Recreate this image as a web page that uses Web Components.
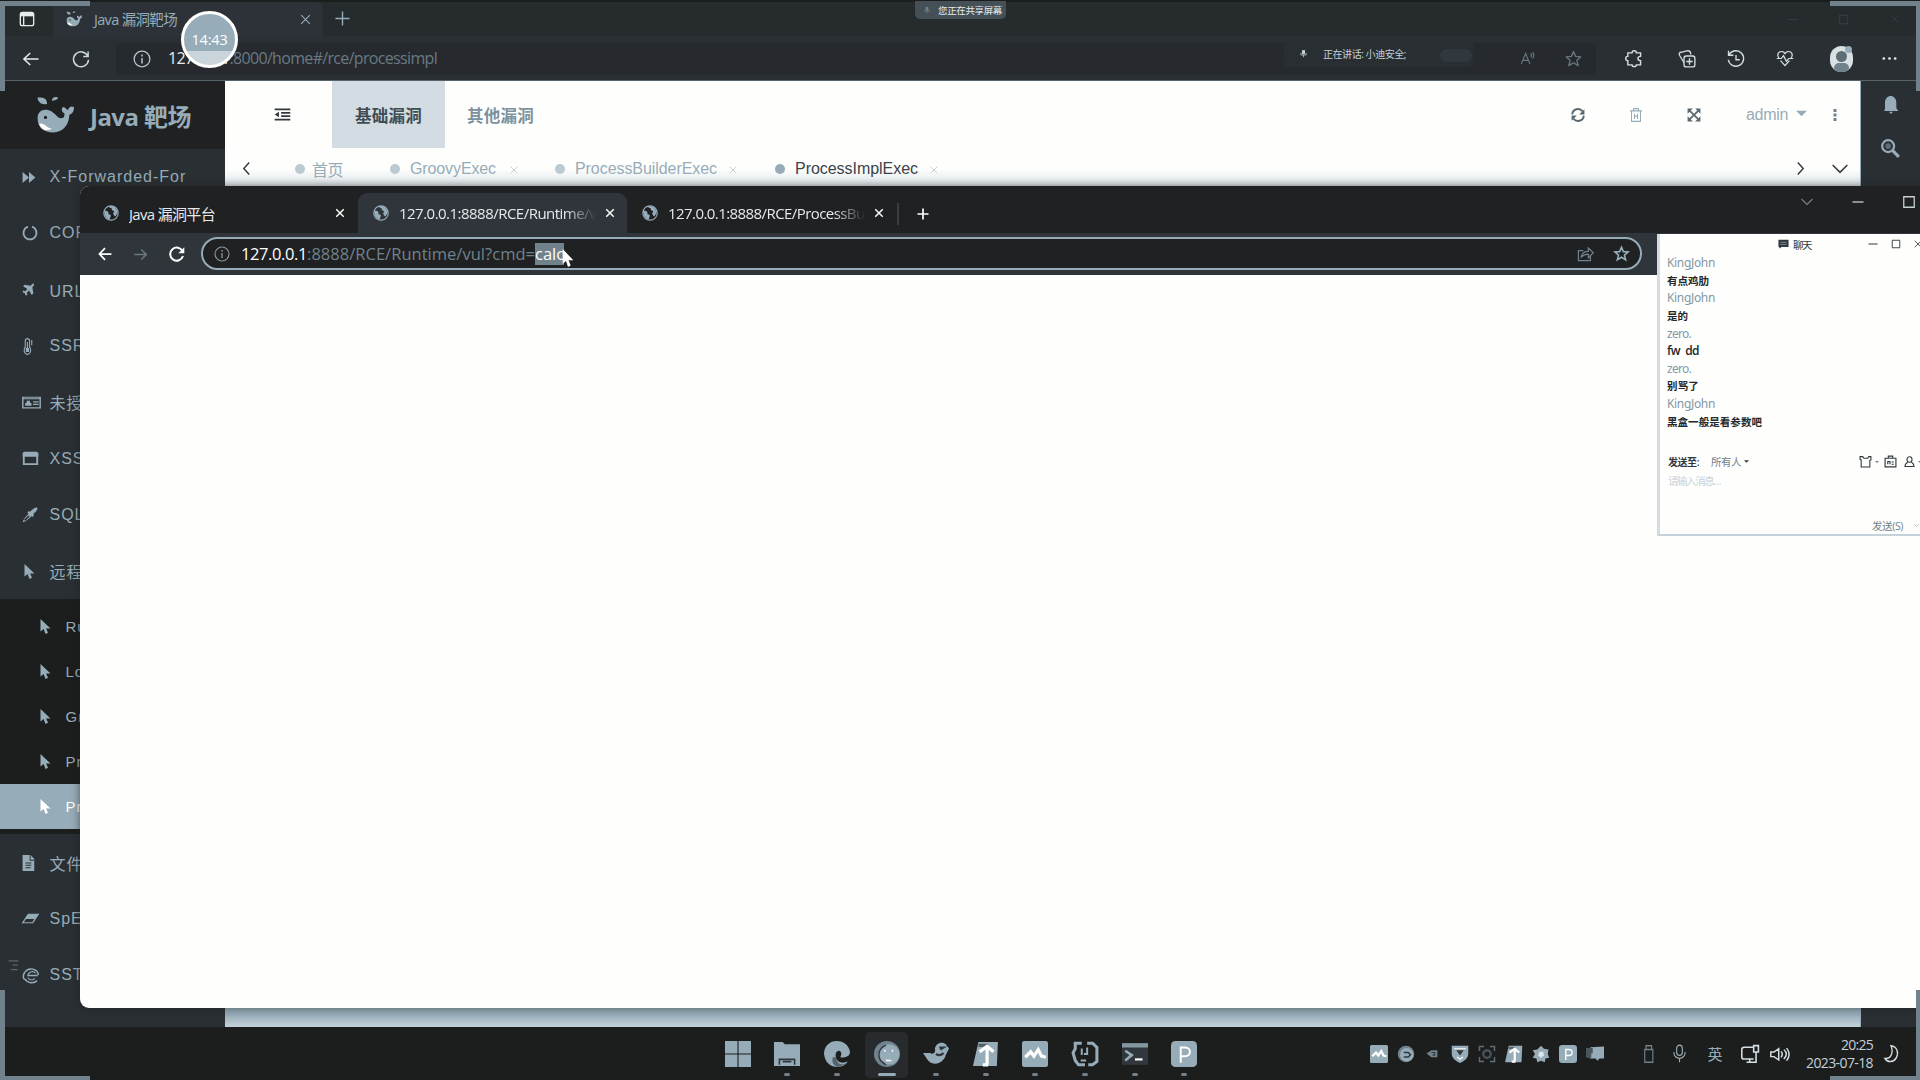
<!DOCTYPE html>
<html lang="zh-CN">
<head>
<meta charset="utf-8">
<title>Java 漏洞靶场</title>
<style>
html,body{margin:0;height:100%;overflow:hidden;background:#1c1e1e}
body{font-family:"Open Sans","Noto Sans CJK SC",sans-serif;font-size:15px;color:#96acb8}
</style>
</head>
<body>
<desk-top></desk-top>
<script>
const fitQueue = [];
const define = (name, html, init) => customElements.define(name, class extends HTMLElement {
  connectedCallback() {
    if (this.shadowRoot) return;
    const root = this.attachShadow({mode: 'open'});
    root.innerHTML = typeof html === 'function' ? html(this) : html;
    if (init) init(this, root);
  }
});

/* ---------- icons, all on a 24 unit grid ---------- */
const S = 'fill="none" stroke="currentColor" stroke-width="2"';
const s = w => `fill="none" stroke="currentColor" stroke-width="${w}"`;
const F = 'fill="currentColor"';
const ICONS = {
  panel: `<path ${S} d="M5 2h14a3 3 0 0 1 3 3v14a3 3 0 0 1-3 3H5a3 3 0 0 1-3-3V5a3 3 0 0 1 3-3zM7 8v14"/><path ${F} d="M2 3h20v5H2z"/>`,
  whale: `<path ${F} d="M1 14c0-4 3-6 7-5 4 1 5 5 8 5 2 0 2-2 2-3-2-1-2-3-1-4 1 0 2 1 3 2 1-2 2-3 4-2 0 3-1 4-3 5 0 6-4 11-10 11C5 23 1 20 1 14zM7 5C4 6 1 4 1 1c3 0 6 0 6 4zm3-2c0-2 2-3 4-2 0 1-2 2-4 2z"/><circle cx="6" cy="13.500" r="1" fill="#1f2122"/><path d="M2 17.500c3-1 5 3 8 3-3 2-7 1-8-3z" fill="#fefefd"/>`,
  x: `<path ${s(2)} d="M4 4l16 16M20 4L4 20"/>`,
  xb: `<path ${s(3.400)} d="M3 3l18 18M21 3L3 21"/>`,
  plus: `<path ${s(2)} d="M12 2v20M2 12h20"/>`,
  plusb: `<path ${s(3.400)} d="M12 1v22M1 12h22"/>`,
  back: `<path ${s(2)} d="M22 12H3M11 4l-8.500 8 8.500 8"/>`,
  backb: `<path ${s(3)} d="M23 12H3M12 2L2.500 12l9.500 10"/>`,
  fwd: `<path ${s(2.400)} d="M2 12h19M13 4l8.500 8-8.500 8"/>`,
  reload: `<path ${s(2)} d="M21 8A10 10 0 1 0 22 13M21.500 2v6.500H15"/>`,
  reload2: `<path ${s(3)} d="M20.500 8A9.800 9.800 0 1 0 21 15"/><path ${F} d="M23 2v9h-9z"/>`,
  info: `<circle cx="12" cy="12" r="10.500" ${s(1.7)}/><path ${s(2)} d="M12 10.500V18M12 6v2.500"/>`,
  ff: `<path ${F} d="M1 2l11 10L1 22zM12 2l11 10-11 10z"/>`,
  ring: `<path ${s(2.8)} d="M9 2.500a9.800 9.800 0 1 0 6 0"/>`,
  plane: `<path ${F} d="M22 1c-2-1-4 1-6 4L5 3 2 6l8 5-4 4-4-1-1 3 4 2 2 4 3-1-1-4 4-4 5 8 3-3-2-11c2-2 4-5 3-7z"/>`,
  thermo: `<path ${s(2)} d="M6 14V5a4 4 0 0 1 8 0v9a6 6 0 1 1-8 0z"/><path ${F} d="M9 6h2v9h2v6H7v-6h2zM17 3h2v8h-2z"/>`,
  idcard: `<path ${s(1.8)} d="M1 3.500h22v17H1zM1 6h22M14 11h7M14 15h7"/><path ${F} d="M4 17v-4l2-1V9h4v3l2 1v4z"/>`,
  win: `<path ${s(2.6)} d="M2.500 4h19v17h-19z"/><path ${F} d="M1 3l2-2h18l2 2v6H1z"/>`,
  pen: `<path ${F} d="M23 1c-3-1-7 2-11 6l-2-1-2 3 2 1c-4 4-8 8-9 13 5-1 9-5 13-9l2 1 2-3-1-2c4-3 7-6 6-9z"/><path d="M4 20l6.500-6.500" stroke="#2a2f33" stroke-width="2.500"/>`,
  ptr: `<path ${F} d="M4 0v20l5-4 3 8 4-2-3-7h7z"/>`,
  doc: `<path ${F} d="M1 0h14l6 6v18H1z"/><path d="M14 0v8h7M6 12h10M6 15.500h10M6 19h9" stroke="#2a2f33" stroke-width="1.600" fill="none"/>`,
  eraser: `<path ${s(1.9)} d="M9 4h14l-8 16H1z"/><path ${F} d="M9 4h14l-4.500 9H4z"/>`,
  ie: `<path ${s(2)} d="M7 12h14M22 11A10 10 0 0 0 4 7M20 19c-4 5-13 4-16-2M4 7c-3 4-3 9 0 11"/><path ${s(1.5)} d="M8 11c1-5 8-6 10-2M8 15c1 3 6 5 9 1"/>`,
  outdent: `<path ${s(3)} d="M1 2.500h22M10 9h13M10 15h13M1 21.500h22"/><path ${F} d="M7 7v10L1 12z"/>`,
  lines: `<path ${s(1.8)} d="M1 2h22M10 11h12M6 21h15"/>`,
  left: `<path ${s(2.6)} d="M17 1L7 12l10 11"/>`,
  right: `<path ${s(2.6)} d="M7 1l10 11L7 23"/>`,
  down: `<path ${s(2.300)} d="M1 6l11 11L23 6"/>`,
  mic: `<path ${F} d="M8 3h8v11H8z"/><path ${s(2)} d="M5 10v6h14v-6M12 16v6"/>`,
  mic2: `<rect x="8" y="1.500" width="8" height="13" rx="4" ${s(1.6)}/><path ${s(1.6)} d="M4 10c0 11 16 11 16 0M12 18v5"/>`,
  read: `<path ${s(1.8)} d="M2 21L9 4l7 17M5 15h8M17 4c2 2 2 4 0 6M20 2c3 3 3 6 0 10"/>`,
  star: `<path ${s(1.8)} stroke-linejoin="round" d="M12 2l3 7 7.500.6-5.700 5 1.800 7.400-6.600-4-6.600 4 1.800-7.400-5.700-5L9 9z"/>`,
  starb: `<path ${s(2.6)} d="M12 2l3 7 7.500.6-5.700 5 1.800 7.400-6.600-4-6.600 4 1.800-7.400-5.700-5L9 9z"/>`,
  puzzle: `<path ${s(2)} d="M6 4h4c0-4 6-4 6 0h6v5c-5 0-5 6 0 6v6h-6c0 3-6 3-6 0H4v-6c-4 0-4-6 0-6V4z"/>`,
  coll: `<path ${s(1.7)} d="M8 17L2 7c-1-2 0-4 2-4l9-2c2 0 4 2 4 5"/><rect x="8" y="8" width="14.500" height="14.500" rx="3" ${s(1.8)}/><path ${s(1.8)} d="M15.300 11v8.500M11 15.300h8.500"/>`,
  history: `<path ${s(1.8)} d="M3 6A10.300 10.300 0 1 1 1.700 13M2 1v6h6.500M12 6.500V13h5"/>`,
  heart: `<path ${s(1.7)} d="M4 12C-1 3 8-1 12 5c4-6 13-2 8 7M1 12h6l3-4 4 8 3-4h6M6 15l6 7 6-7"/>`,
  more: `<g ${F}><circle cx="4" cy="12" r="1.900"/><circle cx="12" cy="12" r="1.900"/><circle cx="20" cy="12" r="1.900"/></g>`,
  vmore: `<g ${F}><path d="M9 0h6v6H9zM9 9h6v6H9zM9 18h6v6H9z"/></g>`,
  sync: `<path ${s(3.200)} d="M2 11C3 1 15-1 20 6M22 13c-1 10-13 12-18 5"/><path ${F} d="M23 2v9h-9zM1 22v-9h9z"/>`,
  trash: `<path ${s(2)} d="M0 5h24M7 5V1h10v4M3 5v18h18V5M9 10v9M15 10v9M9 14h6"/>`,
  expand: `<path ${s(3)} d="M4 4l16 16M20 4L4 20"/><path ${F} d="M1 1h9L1 10zM23 1v9l-9-9zM1 23v-9l9 9zM23 23h-9l9-9z"/>`,
  caret: `<path ${F} d="M0 6h24L12 18z"/>`,
  bell: `<path ${F} d="M3 18V9C3-3 20-3 20 9v7l3 4H2v-2zM9 21h6l-3 3z"/>`,
  search: `<circle cx="9" cy="9" r="7.500" ${s(2.8)}/><path ${s(4)} d="M14.500 14.500l8 8"/><circle cx="9" cy="9" r="3.500" fill="#5f6d75"/>`,
  globe: `<circle cx="12" cy="12" r="10.800" ${s(1.8)}/><path ${F} d="M2 9c5-1 7 2 6 5 3 0 5 2 3 4l-1 4C4 20 2 16 2 9zM9 2c6-2 12 3 13 9l-3 6c-3 0-2-3-4-4l2-4c-3 0-4-1-4-4-2 0-4-1-4-3z"/>`,
  share: `<path ${s(1.7)} d="M9 8H2v14h17v-6M6 17c1-6 5-8 10-8V4l7 7-7 7v-5c-5 0-7 1-10 4z"/>`,
  min: `<path ${s(2.400)} d="M1 12h22"/>`,
  box: `<path ${s(2.200)} d="M3 3h18v18H3z"/>`,
  bubble: `<path ${F} d="M1 2h22v17H8l-5 4v-4H1z"/><path d="M5 8h14M5 13h14" stroke="#96acb8" stroke-width="1.500"/>`,
  shirt: `<path ${s(2)} d="M2 3h5l2 3h7l2-3h4v6l-2 1v12H4V9L2 8z"/>`,
  robot: `<path ${s(2.1)} d="M2 6h20v16H2zM8 6V2h8v4M7 17v-5h4v5M14 13h4M14 17h4"/>`,
  person: `<circle cx="12" cy="7" r="5.500" ${s(2.300)}/><path ${s(2.300)} d="M8 12c-6 4-6 6-6 9h20c0-3 0-5-6-9"/>`,
  usb: `<path ${s(1.8)} d="M8 6V1h9v5M6 6h13v17H6z"/>`,
  net: `<path ${s(2)} d="M16 4H4a3 3 0 0 0-3 3v9a3 3 0 0 0 3 3h12M7 23h12V10M16 2h6v8h-6zM11 19v4"/>`,
  vol: `<path ${s(1.9)} d="M1 9h4l6-5v17l-6-5H1zM14 8c2 3 2 6 0 9M17.500 5.500c4 4 4 9 0 14M21 3c4 6 4 13 0 19"/>`,
  moon: `<path ${s(2)} d="M12 1c9 1 12 9 8 16-4 6-13 7-17 1 9 1 13-8 9-17z"/>`,
  start: `<path ${F} d="M0 0h11.500v11.500H0zM12.500 0H24v11.500H12.500zM0 12.500h11.500V24H0zM12.500 12.500H24V24H12.500z"/>`,
  folder: `<path ${F} d="M0 1h8l2 2h14v20H0z"/><path d="M5 22v-5h14v5M8 19h8" fill="none" stroke="#31383d" stroke-width="1.500"/>`,
  swirl: `<path ${F} d="M12 0C4 0 0 6 0 12c1 8 6 12 13 12 4 0 7-2 9-5-5 2-10 1-11-4-1-4 1-6 3-6 3 1 2 4 1 6 5 1 9-1 9-5C23 4 18 0 12 0z"/><path d="M11 15c1 7 6 8 10 5l-2 2-6 2c-4-1-6-4-5-9z" fill="#56636b"/>`,
  browser: `<circle cx="12" cy="12" r="12" fill="#71828c"/><circle cx="14" cy="12.500" r="9.500" ${F}/><path d="M10 8v2M17 8v2M11 18h5" stroke="#fefefd" stroke-width="1.300" fill="none"/><path d="M11 4C5 6 3 12 6 18l5 4" stroke="#31383d" stroke-width="1.300" fill="none"/>`,
  bird: `<path ${F} d="M0 11h7c2 2 5 0 4-4 1-5 6-7 10-4l3 4-3 6c-2 8-12 11-17 4z"/><path d="M12 12c3 2 5 1 7-1M15 6h4l-3 2" stroke="#31383d" stroke-width="2" fill="none"/>`,
  tool: `<path ${F} d="M5 1h18l-1 22H0z"/><path d="M5 4h9" stroke="#56636b" stroke-width="3"/><path d="M13 22V7M6 10l7-5 6 5M9 22h5" stroke="#fefefd" stroke-width="3" fill="none"/>`,
  wave: `<path ${F} d="M0 2q0-2 2-2h20q2 0 2 2v20q0 2-2 2H2q-2 0-2-2z"/><path d="M3 15l5-5 3 4 4-6 3 6 4 1" stroke="#fefefd" stroke-width="3" fill="none"/>`,
  idea: `<path ${s(2.800)} d="M9 2H3v5l-2 4 2 7 3 4h6M14 2h5l4 4v13l-4 3h-4"/><path ${s(1.8)} d="M8 18h5M9 7v6M14 6v6h-3"/>`,
  term: `<path fill="#31383d" d="M0 2h24v20H0z"/><path fill="#84979f" d="M0 2h24v4H0z"/><path ${s(2.400)} d="M3 9l6 4-6 5"/><path stroke="#fefefd" stroke-width="2" d="M12 17h7"/>`,
  ptile: `<rect width="24" height="24" rx="4" ${F}/><path d="M9 20V6h4c6 0 6 8 0 8H9" stroke="#fefefd" stroke-width="1.800" fill="none"/>`,
  spiral: `<circle cx="12" cy="12" r="11" fill="#71828c"/><circle cx="13" cy="13" r="9" ${F}/><path d="M9 10h6l3 3-3 3H9" fill="none" stroke="#31383d" stroke-width="2"/>`,
  fish: `<path fill="#71828c" d="M1 12l9-6h11v13H10z"/><path d="M10 10h6v5h-4" stroke="#31383d" stroke-width="2" fill="none"/>`,
  shield: `<path ${F} d="M1 1h22v10c0 7-5 10-11 13C6 21 1 18 1 11z"/><path d="M7 7h10l-5 7z" fill="#31383d"/><path d="M4 5h16M8 16l4 3 4-3" stroke="#fefefd" stroke-width="1.500" fill="none"/>`,
  frame: `<path fill="none" stroke="#5f6d75" stroke-width="2" d="M2 8V2h6M16 2h6v6M22 16v6h-6M8 22H2v-6"/><circle cx="12" cy="12" r="5" fill="none" stroke="#4a555c" stroke-width="3"/>`,
  blob: `<path ${F} d="M12 1l4 4 6 1-1 6 2 5-5 1-1 5-5-2-5 2-1-5-5-1 3-5-3-5 6-1z"/><path fill="#dfe6e9" d="M10 9h5l1 5-4 3-4-3z"/>`,
  screens: `<path ${F} d="M6 3l18-1v16h-6l-3 3-2-3H5z"/><path fill="#4a555c" d="M0 4h9v7H7v6H0z"/>`
};
define('ui-icon', el => {
  const z = el.getAttribute('size') || 16, h = el.getAttribute('h') || z;
  return `<style>:host{display:inline-flex;flex:none}svg{display:block;overflow:visible}</style>
  <svg width="${z}" height="${h}" viewBox="0 0 24 24" preserveAspectRatio="none">${ICONS[el.getAttribute('name')]}</svg>`;
});

/* text whose tracking is adjusted so that the run takes exactly w pixels */
define('fit-text', `<style>:host{display:inline-block;flex:none;white-space:pre}</style><slot></slot>`, el => fitQueue.push(el));

/* fixed-width box in a row, content centred */
define('ui-cell', el => `<style>:host{display:flex;flex:none;width:${el.getAttribute('w')}px;align-items:center;justify-content:${el.hasAttribute('start') ? 'flex-start' : 'center'};color:${el.getAttribute('c') || 'inherit'}}</style><slot></slot>`);
define('ui-row', el => `<style>:host{display:flex;flex:none;align-items:center;height:${el.getAttribute('h')}px}</style><slot></slot>`);

/* ---------- rear browser ---------- */
define('edge-tabs', `<style>
:host{display:block;height:36px;background:#262b2e}
.active{display:flex;align-items:center;height:34px;margin-top:2px;width:270px;background:#2c3237;border-radius:6px 6px 0 0}
.all{display:flex}
.r{margin-left:auto;display:flex;align-items:center;color:#353c41}
</style><div class="all">
<ui-row h="38"><ui-cell w="53" c="#e6ebed"><ui-icon name="panel" size="16"></ui-icon></ui-cell></ui-row>
<div class="active"><ui-cell w="41"><ui-icon name="whale" size="16"></ui-icon></ui-cell><ui-cell start w="192"><fit-text w="83" style="font-size:14.500px;margin-top:-2px">Java 漏洞靶场</fit-text></ui-cell><ui-cell w="38"><ui-icon name="x" size="13"></ui-icon></ui-cell></div>
<ui-row h="37"><ui-cell w="38"><ui-icon name="plus" size="17"></ui-icon></ui-cell></ui-row>
<div class="r"><ui-cell w="51"><ui-icon name="min" size="11"></ui-icon></ui-cell><ui-cell w="51"><ui-icon name="box" size="11"></ui-icon></ui-cell><ui-cell w="51"><ui-icon name="x" size="10"></ui-icon></ui-cell></div></div>`);
define('edge-toolbar', `<style>
:host{display:flex;align-items:center;height:45px;padding-top:1px;background:#2a2f33;border-bottom:1px solid #56636b;box-sizing:border-box}
.addr{display:flex;align-items:center;height:32px;width:1480px;border-radius:5px;background:#262a2e;box-sizing:border-box;flex:none}
.speak{display:flex;align-items:center;height:26px;margin-left:auto;width:190px;font-size:10px;color:#c4d0d6;background:#292e32;border-radius:4px;margin-bottom:10px}
.pill{width:32px;height:13px;border-radius:7px;background:#31383d;margin-top:4px}
.sep{width:1px;height:15px;background:#71828c}
.av{display:flex;margin-left:6px;align-items:flex-start}
.face{display:block;width:23px;height:26px;border-radius:12px;background:#d9e1e5;overflow:hidden;flex:none}
.badge{width:7px;height:7px;border-radius:4px;background:#96acb8;margin-left:-8px}
b{display:block;width:11px;height:11px;border-radius:6px;background:#5f6d75;margin:5px auto 1px}i{display:block;width:15px;height:10px;border-radius:7px;background:#71828c;margin:auto}
</style>
<ui-cell w="62" c="#e6ebed"><ui-icon name="back" size="18"></ui-icon></ui-cell><ui-cell w="38" c="#cbd6db"><ui-icon name="reload" size="18"></ui-icon></ui-cell><ui-cell w="16"></ui-cell>
<div class="addr"><ui-cell w="52" c="#b5c4cc"><ui-icon name="info" size="18"></ui-icon></ui-cell><fit-text w="269" style="font-size:16px;color:#697983;margin-bottom:1px"><span style="color:#e6ebed">127.0.0.1</span>:8000/home#/rce/processimpl</fit-text>
<div class="speak"><ui-cell w="39"><ui-icon name="mic" size="9"></ui-icon></ui-cell><fit-text w="83">正在讲话: 小迪安全;</fit-text><ui-cell w="99"><span class="pill"></span></ui-cell></div>
<ui-cell w="30"></ui-cell><ui-cell w="46" c="#697983"><ui-icon name="read" size="15"></ui-icon></ui-cell><ui-cell w="46" c="#697983"><ui-icon name="star" size="17"></ui-icon></ui-cell></div>
<ui-cell w="74" c="#d5dee2"><ui-icon name="puzzle" size="17"></ui-icon></ui-cell><span style="margin-right:-6px;margin-left:-11px" class="sep"></span>
<ui-cell w="68" c="#d5dee2"><ui-icon name="coll" size="18"></ui-icon></ui-cell><ui-cell w="30" c="#d5dee2"><ui-icon name="history" size="18"></ui-icon></ui-cell><ui-cell w="68" c="#d5dee2"><ui-icon name="heart" size="18" h="17"></ui-icon></ui-cell><ui-cell w="38"><span class="av"><span class="face"><b></b><i></i></span><span class="badge"></span></span></ui-cell><ui-cell w="64" c="#e6ebed"><ui-icon name="more" size="17"></ui-icon></ui-cell>`);

define('menu-item', el => `<style>
:host{display:flex;align-items:center;height:56.300px;padding-left:22px;color:#96acb8;font:16px "Liberation Sans","Noto Sans CJK SC",sans-serif;letter-spacing:1px;white-space:nowrap}
:host([sub]){height:45px;padding-left:38px;font-size:15px}
:host([on]){background:#96acb8;color:#fefefd}
span{width:27.500px;flex:none;display:flex;align-items:center}
</style><span><ui-icon name="${el.getAttribute('icon')}" size="${el.getAttribute('size') || 16}" h="${el.getAttribute('h') || el.getAttribute('size') || 16}"></ui-icon></span><slot></slot>`);
define('side-menu', `<style>
:host{display:flex;flex-direction:column;width:225px;flex:none;background:#2a2f33;overflow:hidden}
.brand{display:flex;align-items:center;height:68px;background:#1f2122;font:bold 24px "Open Sans","Noto Sans CJK SC",sans-serif;flex:none}
.sub{background:#1c1e1e;padding:5px 0}
menu-item{flex:none}
</style>
<div class="brand"><ui-cell w="90"><ui-icon name="whale" size="38" style="margin-left:20px"></ui-icon></ui-cell><fit-text w="101">Java 靶场</fit-text></div>
<menu-item icon="ff" size="14" h="13">X-Forwarded-For</menu-item>
<menu-item icon="ring">CORS</menu-item>
<menu-item icon="plane" size="13">URL重定向</menu-item>
<menu-item icon="thermo" size="13" h="16">SSRF</menu-item>
<menu-item icon="idcard" size="19" h="15">未授权</menu-item>
<menu-item icon="win" size="17" h="15">XSS</menu-item>
<menu-item icon="pen">SQLI</menu-item>
<menu-item icon="ptr" size="15">远程命令</menu-item>
<div class="sub">
<menu-item sub icon="ptr" size="15">Runtime</menu-item><menu-item sub icon="ptr" size="15">LoadJs</menu-item><menu-item sub icon="ptr" size="15">Groovy</menu-item><menu-item sub icon="ptr" size="15">ProcessBuilder</menu-item><menu-item sub on icon="ptr" size="15">ProcessImpl</menu-item></div>
<menu-item icon="doc" size="14" h="16">文件</menu-item>
<menu-item icon="eraser" size="17" h="13">SpEL</menu-item>
<menu-item icon="ie" size="18" h="17">SSTI</menu-item>`);
define('page-tab', el => `<style>
:host{display:flex;align-items:center;flex:none;width:${el.getAttribute('w')}px;color:#96acb8;font:16px "Liberation Sans","Noto Sans CJK SC",sans-serif}
.d{width:10px;height:10px;border-radius:5px;background:#bccad2;margin-right:10px;flex:none}
:host([noclose]) .d{margin-right:7px}
:host([on]){color:#3a434a}:host([on]) .d{background:#96acb8}
.x{margin-left:auto;color:#b9c8d0;display:flex;align-items:center;padding-top:2px;margin-right:-1px}
</style><span class="d"></span><slot></slot>${el.hasAttribute('noclose') ? '' : '<span class="x"><ui-icon name="x" size="10"></ui-icon></span>'}`);
define('page-head', `<style>
:host{display:block;background:#fefefd}
.top{display:flex;height:67px;align-items:center;font-weight:bold;font-size:16.500px}
.sel{background:#d2dce2;width:113px;height:67px;display:flex;align-items:center;justify-content:center;color:#414c53}
.bar{display:flex;align-items:center;height:38px;padding-top:3px;box-sizing:border-box;background:linear-gradient(#fefefd 55%,#dfe6ea)}
.r{margin-left:auto;display:flex;align-items:center;font-weight:400}
</style>
<div class="top"><ui-cell w="107" c="#31383d" style="margin-left:4px"><ui-icon name="outdent" size="17" h="13"></ui-icon></ui-cell><div style="margin-left:-4px" class="sel"><fit-text w="67">基础漏洞</fit-text></div><ui-cell w="111" c="#7d929e"><fit-text w="67">其他漏洞</fit-text></ui-cell>
<div class="r"><ui-cell w="58" c="#586870"><ui-icon name="sync" size="14"></ui-icon></ui-cell><ui-cell w="58"><ui-icon name="trash" size="12" h="14"></ui-icon></ui-cell><ui-cell w="58" c="#586870"><ui-icon name="expand" size="14"></ui-icon></ui-cell><ui-cell w="23"></ui-cell><fit-text w="42" style="font:16px 'Liberation Sans'">admin</fit-text><ui-cell w="26"><ui-icon name="caret" size="11" style="margin-top:-2px"></ui-icon></ui-cell><ui-cell w="42" c="#71828c"><ui-icon name="vmore" size="12"></ui-icon></ui-cell><ui-cell w="4"></ui-cell></div></div>
<div class="bar"><ui-cell w="43" c="#31383d"><ui-icon name="left" size="13"></ui-icon></ui-cell><ui-cell w="27"></ui-cell>
<page-tab noclose w="95"><fit-text w="31">首页</fit-text></page-tab><page-tab w="128"><fit-text w="86">GroovyExec</fit-text></page-tab><ui-cell w="37"></ui-cell><page-tab w="182"><fit-text w="142">ProcessBuilderExec</fit-text></page-tab><ui-cell w="38"></ui-cell><page-tab on w="163"><fit-text w="123">ProcessImplExec</fit-text></page-tab>
<div class="r"><ui-cell w="40" c="#31383d"><ui-icon name="right" size="13"></ui-icon></ui-cell><ui-cell w="40" c="#31383d"><ui-icon name="down" size="16"></ui-icon></ui-cell></div></div>`);
define('edge-window', `<style>
:host{display:flex;flex-direction:column;position:absolute;inset:0 0 53px 0;background:#2a2f33;overflow:hidden}
.body{display:flex;flex:1;min-height:0}
.page{flex:1;background:#fefefd;display:flex;flex-direction:column;border-right:1px solid #96acb8}
.foot{height:19px;margin-top:auto;background:linear-gradient(#96acb8 35%,#c6d2d9)}
.rail{width:59px;display:flex;flex-direction:column;align-items:center;background:#2a2f33;padding-top:15px;box-sizing:border-box;gap:25px}
</style><edge-tabs></edge-tabs><edge-toolbar></edge-toolbar>
<div class="body"><side-menu></side-menu><div class="page"><page-head></page-head><div class="foot"></div></div><div class="rail"><ui-icon name="bell" size="16" h="18"></ui-icon><ui-icon name="search" size="19"></ui-icon></div></div>`);

/* ---------- front browser ---------- */
define('chrome-tab', el => `<style>
:host{display:flex;align-items:center;width:269px;height:40px;box-sizing:border-box;padding-left:15px;border-radius:9px 9px 0 0;font-size:15px;color:#e4eaec}
:host([on]){background:#2f353a}
.t{width:207px;flex:none;display:flex;overflow:hidden;margin-left:10px}
:host([fade]) .t{width:197px;margin-right:10px;-webkit-mask:linear-gradient(90deg,#000 84%,transparent);mask:linear-gradient(90deg,#000 84%,transparent)}
</style><ui-icon name="globe" size="16" style="color:#96acb8"></ui-icon><span class="t"><slot></slot></span><ui-icon name="xb" size="10" style="color:#fefefd;margin-left:-1px"></ui-icon>`);
define('chrome-window', `<style>
:host{display:flex;flex-direction:column;position:absolute;left:80px;top:186px;width:1854px;height:822px;background:#fefefd;border-radius:9px 0 0 9px;overflow:hidden;box-shadow:0 0 8px #1c1e1e99}
.strip{display:flex;height:47px;background:#1f2122;align-items:flex-end;box-sizing:border-box;padding-left:9px}
.strip .end{display:flex;margin-left:auto;align-self:flex-start;height:32px;align-items:center;color:#fefefd}
.sep{width:2px;height:22px;background:#363e44;margin:0 0 8px 1px}
.tools{display:flex;align-items:center;height:42px;background:#2f353a;padding-left:7px}
.omni{display:flex;align-items:center;width:1441px;height:33px;box-sizing:border-box;border:2px solid #96acb8;border-radius:17px;background:#1f2122;font-size:16.500px;margin-left:5px;margin-top:-1px}
.sel{background:#71828c;color:#fefefd;height:22px;line-height:21px}
</style>
<div class="strip"><chrome-tab style="padding-left:14px"><fit-text w="86">Java 漏洞平台</fit-text></chrome-tab><chrome-tab on fade><fit-text w="209">127.0.0.1:8888/RCE/Runtime/vul</fit-text></chrome-tab><chrome-tab fade><fit-text w="203">127.0.0.1:8888/RCE/ProcessBuil</fit-text></chrome-tab><span class="sep"></span><ui-row h="38"><ui-cell w="48" c="#fefefd"><ui-icon name="plusb" size="12"></ui-icon></ui-cell></ui-row>
<div class="end"><ui-cell w="51" c="#71828c"><ui-icon name="down" size="12"></ui-icon></ui-cell><ui-cell w="51"><ui-icon name="min" size="12"></ui-icon></ui-cell><ui-cell w="51" c="#c4d0d6"><ui-icon name="box" size="14"></ui-icon></ui-cell></div></div>
<div class="tools"><ui-cell w="36" c="#fefefd"><ui-icon name="backb" size="14"></ui-icon></ui-cell><ui-cell w="35" c="#697983"><ui-icon name="fwd" size="15"></ui-icon></ui-cell><ui-cell w="38" c="#fefefd"><ui-icon name="reload2" size="16"></ui-icon></ui-cell>
<div class="omni"><ui-cell w="38" c="#84979f"><ui-icon name="info" size="16"></ui-icon></ui-cell><fit-text w="66" style="color:#fefefd">127.0.0.1</fit-text><fit-text w="228" style="color:#71828c">:8888/RCE/Runtime/vul?cmd=</fit-text><span class="sel"><fit-text w="29">calc</fit-text></span>
<ui-cell w="36" c="#71828c" style="margin-left:auto"><ui-icon name="share" size="17"></ui-icon></ui-cell><ui-cell w="37"><ui-icon name="starb" size="15"></ui-icon></ui-cell></div></div>`);

/* ---------- meeting chat ---------- */
define('chat-panel', `<style>
:host{display:flex;flex-direction:column;position:absolute;left:1657px;top:234px;width:263px;height:302px;box-sizing:border-box;background:#fefefd;border-left:3px solid #d2dce2;border-bottom:2px solid #c6d2d9;overflow:hidden;color:#31383d;font-size:10.500px}
.head{display:flex;align-items:center;height:20px;flex:none;padding-left:118px}
.log{display:flex;flex-direction:column;padding:0 0 0 7px;flex:none}
.n{color:#8399a5;font:12px "Noto Sans",sans-serif}.n,.m{display:flex;align-items:center;height:17.600px;flex:none}.m{font-weight:600;color:#23282b}
.to{display:flex;align-items:center;height:22px;padding-left:8px;margin-top:21px;flex:none}
.ph{padding-left:8px;color:#c6d2d9;line-height:17px;flex:none}
.send{display:flex;align-items:center;margin:28px 0 0 212px;color:#71828c}
</style>
<div class="head"><ui-icon name="bubble" size="11" h="10"></ui-icon><fit-text w="18" style="margin-left:4px">聊天</fit-text><ui-cell w="62"></ui-cell><ui-icon name="min" size="10" style="margin-left:-5px"></ui-icon><ui-icon name="box" size="10" style="margin-left:13px"></ui-icon><ui-icon name="x" size="10" style="margin-left:12px"></ui-icon></div>
<div class="log">
<div class="n"><fit-text w="48">KingJohn</fit-text></div><div class="m"><fit-text w="42">有点鸡肋</fit-text></div>
<div class="n"><fit-text w="48">KingJohn</fit-text></div><div class="m"><fit-text w="21">是的</fit-text></div>
<div class="n"><fit-text w="24">zero.</fit-text></div><div class="m"><fit-text w="32" style="font-size:12px">fw  dd</fit-text></div>
<div class="n"><fit-text w="24">zero.</fit-text></div><div class="m"><fit-text w="32">别骂了</fit-text></div>
<div class="n"><fit-text w="48">KingJohn</fit-text></div><div class="m"><fit-text w="95">黑盒一般是看参数吧</fit-text></div></div>
<div class="to"><fit-text w="31" style="font-weight:600;font-size:10px">发送至:</fit-text><fit-text w="30" style="margin-left:12px;color:#71828c">所有人</fit-text><ui-icon name="caret" size="5" style="margin-left:3px"></ui-icon><ui-icon name="shirt" size="13" style="margin-left:110px"></ui-icon><ui-icon name="caret" size="4" style="margin-left:3px;color:#71828c"></ui-icon><ui-icon name="robot" size="13" style="margin-left:5px"></ui-icon><ui-icon name="person" size="11" h="12" style="margin-left:7px"></ui-icon><ui-icon name="caret" size="4" style="margin-left:3px;color:#71828c"></ui-icon></div>
<div class="ph"><fit-text w="52">请输入消息…</fit-text></div>
<div class="send"><fit-text w="31">发送(S)</fit-text><ui-icon name="down" size="5" style="margin-left:11px"></ui-icon></div>`);

/* ---------- taskbar ---------- */
define('task-app', el => `<style>
:host{display:flex;flex-direction:column;align-items:center;width:43.600px;height:46px;padding-top:9px;box-sizing:border-box;border-radius:5px;gap:6px}
:host([on]){background:#272b2e}i{width:6px;height:3px;border-radius:2px;background:#71828c}
:host([on]) i{width:18px;background:#96acb8}:host([idle]) i{display:none}
</style><ui-icon name="${el.getAttribute('icon')}" size="26"></ui-icon><i></i>`);
define('task-bar', `<style>
:host{display:flex;position:absolute;left:0;right:0;bottom:0;height:53px;background:#1c1e1e}
.apps{display:flex;gap:6px;padding:5px 0 0 716px}
.tray{display:flex;align-items:center;margin-left:auto;height:53px}
.clock{display:flex;flex-direction:column;align-items:flex-end;width:82px;font-size:14px;line-height:18px;color:#c4d0d6;margin-top:1px}
</style><div class="apps">${['start','folder','swirl','browser','bird','tool','wave','idea','term','ptile'].map((n, i) => `<task-app icon="${n}" ${i == 3 ? 'on' : ''} ${i == 0 ? 'idle' : ''}></task-app>`).join('')}</div>
<div class="tray">${['wave','spiral','fish','shield','frame','tool','blob','ptile','screens'].map((n, i) => `<ui-cell w="27.100"><ui-icon name="${n}" size="${i == 2 ? 13 : 18}"></ui-icon></ui-cell>`).join('')}
<ui-cell w="25"></ui-cell><ui-cell w="28" c="#71828c"><ui-icon name="usb" size="15" h="18"></ui-icon></ui-cell><ui-cell w="34"><ui-icon name="mic2" size="17" h="19"></ui-icon></ui-cell><ui-cell w="38" style="font-size:15px"><span>英</span></ui-cell><ui-cell w="33" c="#d5dee2"><ui-icon name="net" size="19"></ui-icon></ui-cell><ui-cell w="24" c="#d5dee2"><ui-icon name="vol" size="19" h="16"></ui-icon></ui-cell>
<div class="clock"><fit-text w="32">20:25</fit-text><fit-text w="67">2023-07-18</fit-text></div><ui-cell w="36" c="#d5dee2"><ui-icon name="moon" size="16" h="18"></ui-icon></ui-cell><ui-cell w="11"></ui-cell></div>`);

/* ---------- desktop ---------- */
define('desk-top', `<style>
:host{display:block;position:relative;width:1920px;height:1080px;overflow:hidden}
.edge{position:absolute;left:0;right:0;top:0;height:2px;background:#1c1e1e}
.share{position:absolute;left:915px;top:1px;width:91px;height:18px;border-radius:0 0 5px 5px;background:#454f56;display:flex;align-items:center;color:#e6ebed;font-size:9.500px}
.timer{position:absolute;left:181px;top:11px;width:57px;height:57px;box-sizing:border-box;border-radius:50%;border:3px solid #fefefd;background:linear-gradient(#96acb8 72%,#c9d5db 73%);display:flex;align-items:center;justify-content:center;color:#fefefd;font-size:14.500px}
.k{position:absolute;width:90px;height:90px;box-sizing:border-box;border:0 solid #71828c}
.cur{position:absolute;left:560px;top:249px;color:#fefefd}
.list{position:absolute;left:8px;top:960px;color:#71828c}
</style>
<edge-window></edge-window><chrome-window></chrome-window><chat-panel></chat-panel><task-bar></task-bar>
<div class="edge"></div>
<div class="share"><ui-cell w="23" c="#71828c"><ui-icon name="mic" size="8"></ui-icon></ui-cell><fit-text w="64">您正在共享屏幕</fit-text></div>
<div class="timer"><fit-text w="36">14:43</fit-text></div>
<div class="k" style="left:0;top:1px;border-width:5px 0 0 5px"></div><div class="k" style="right:0;top:1px;border-width:5px 4px 0 0"></div><div class="k" style="left:0;bottom:0;border-width:0 0 4px 5px"></div><div class="k" style="right:0;bottom:0;border-width:0 4px 4px 0"></div>
<ui-icon class="list" name="lines" size="11" h="11"></ui-icon>
<ui-icon class="cur" name="ptr" size="16" h="18"></ui-icon>`);

for (const el of fitQueue) {
  const want = +el.getAttribute('w'), n = [...el.textContent].length;
  el.style.letterSpacing = ((want - el.getBoundingClientRect().width) / n) + 'px';
}
</script>
</body>
</html>
